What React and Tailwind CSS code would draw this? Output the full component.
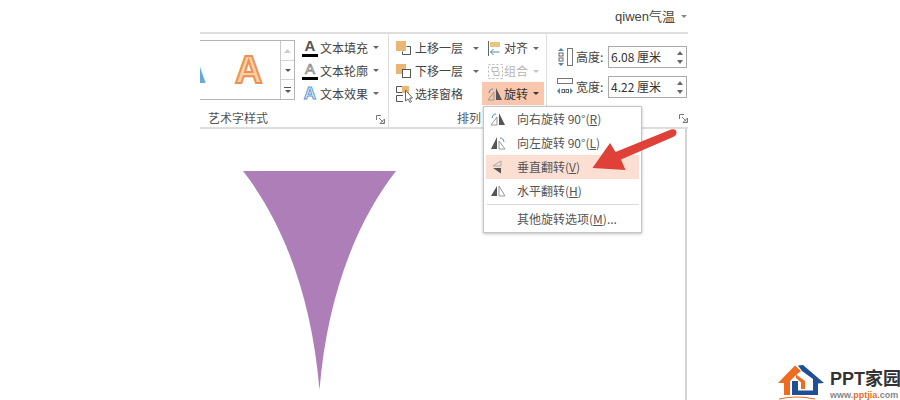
const F = { fontFamily: '"Noto Sans CJK SC","Liberation Sans",sans-serif' };

const Caret = ({ c = "#666" }) => (
  <svg width="6" height="3" viewBox="0 0 6 3" className="shrink-0"><path d="M0 0h6L3 3z" fill={c} /></svg>
);

const Launcher = () => (
  <svg width="9" height="9" viewBox="0 0 9 9" className="shrink-0" fill="none">
    <path d="M.5 5V.5H5" stroke="#777" />
    <path d="M3 3l4.5 4.500M8.500 4v4.500H4z" stroke="#777" />
  </svg>
);

const RotR = () => (
  <svg width="16" height="14" viewBox="0 0 16 14">
    <path d="M1 13L7 5v8z" fill="none" stroke="#999" />
    <path d="M9 1l6 12H9z" fill="#555" />
    <path d="M2 6C2.500 3 4 2 6 2" fill="none" stroke="#4a87b8" strokeWidth="1" />
  </svg>
);
const RotL = () => (
  <svg width="16" height="14" viewBox="0 0 16 14">
    <path d="M7 1L1 13h6z" fill="#555" />
    <path d="M9 5l6 8H9z" fill="none" stroke="#999" />
    <path d="M14 6C13.500 3 12 2 10 2" fill="none" stroke="#4a87b8" />
  </svg>
);
const FlipV = () => (
  <svg width="16" height="14" viewBox="0 0 16 14">
    <path d="M11 1L3 6h8z" fill="none" stroke="#aaa" />
    <path d="M11 8H3l8 5.500z" fill="#555" />
  </svg>
);
const FlipH = () => (
  <svg width="16" height="14" viewBox="0 0 16 14">
    <path d="M7 2L1 12h6z" fill="#555" />
    <path d="M9 2l6 10H9z" fill="none" stroke="#999" />
  </svg>
);

const TextA = ({ kind }) => (
  <div className="w-[16px] h-[20px] flex flex-col items-center shrink-0">
    {kind === "fill" && (
      <>
        <span className="text-[15px] leading-[15px] font-bold text-[#555] font-['Liberation_Sans']">A</span>
        <span className="w-[16px] h-[3px] mt-[1px] bg-black" />
      </>
    )}
    {kind === "line" && (
      <>
        <span className="text-[15px] leading-[15px] text-white [-webkit-text-stroke:0.7px_#777] font-['Liberation_Sans']">A</span>
        <span className="w-[16px] h-[3px] mt-[1px] bg-black" />
      </>
    )}
    {kind === "fx" && (
      <span className="text-[17px] leading-[19px] font-bold text-[#eaf3fb] [-webkit-text-stroke:1px_#5b9bd5] font-['Liberation_Sans']">A</span>
    )}
  </div>
);

const TextRow = ({ kind, label }) => (
  <div className="h-[23px] flex items-center gap-[2px]">
    <TextA kind={kind} />
    <span className="text-[12px] leading-none text-[#444]">{label}</span>
    <span className="ml-[3px]"><Caret /></span>
  </div>
);

const LayerIcon = ({ up }) => (
  <svg width="16" height="16" viewBox="0 0 16 16">
    <rect x="0" y="1" width="10" height="10" fill="#e9b673" />
    {up ? (
      <path d="M10.500 6.500h4v8h-8v-3" fill="none" stroke="#555" />
    ) : (
      <rect x="6.500" y="6.500" width="8" height="8" fill="#fff" stroke="#555" />
    )}
  </svg>
);

const SelectIcon = () => (
  <svg width="18" height="18" viewBox="0 0 18 18" fill="none">
    <path d="M7 1.500H.5v6H7M7 10.500H.5v6H7" stroke="#555" />
    <rect x="6" y="1" width="7" height="7" fill="#e9b673" />
    <path d="M9.500 5v11l2.500-2 2 3.500 1.500-.8-2-3.400 3-.3z" fill="#fff" stroke="#666" />
  </svg>
);

const AlignIcon = () => (
  <svg width="16" height="17" viewBox="0 0 16 17" fill="none">
    <path d="M1.500 1v15" stroke="#666" />
    <rect x="3" y="2" width="10" height="5" fill="#e9c47f" />
    <path d="M3.500 12h9M3.500 12l3-3M3.500 12l3 3" stroke="#4a87b8" />
  </svg>
);

const GroupIcon = () => (
  <svg width="17" height="17" viewBox="0 0 17 17" fill="none" stroke="#b8b8b8">
    <rect x="1.500" y="1.500" width="14" height="14" strokeDasharray="2 2" />
    <path d="M5 4.500h6v4H5zM7 8.500v4h5v-4" />
  </svg>
);

const HeightIcon = () => (
  <svg width="16" height="18" viewBox="0 0 16 18" fill="none">
    <path d="M4 0L1 3h6zM4 18l-3-3h6z" fill="#4a87b8" />
    <rect x="2" y="5" width="4" height="3" stroke="#666" />
    <rect x="2" y="10" width="4" height="3" stroke="#666" />
    <rect x="10.500" y=".5" width="5" height="17" stroke="#777" />
  </svg>
);

const WidthIcon = () => (
  <svg width="16" height="18" viewBox="0 0 16 18" fill="none">
    <rect x=".5" y=".5" width="15" height="5" stroke="#777" />
    <path d="M0 13l3-3v6zM16 13l-3-3v6z" fill="#4a87b8" />
    <rect x="5" y="11.500" width="2.500" height="3" stroke="#666" />
    <rect x="9" y="11.500" width="2.500" height="3" stroke="#666" />
  </svg>
);

const SizeRow = ({ icon, label, value }) => (
  <div className="flex items-center h-[22px]">
    <span className="w-[19px] shrink-0 flex">{icon}</span>
    <span className="w-[32px] shrink-0 text-[12px] leading-none text-[#444]">{label}</span>
    <div className="w-[79px] h-[22px] border border-[#ababab] flex items-center pl-[2px] pr-[3px] text-[12px] text-[#333]">
      <span className="flex-1 whitespace-pre">{value}</span>
      <span className="flex flex-col gap-[5px]">
        <svg width="6" height="4" viewBox="0 0 6 4"><path d="M3 0l3 4H0z" fill="#666" /></svg>
        <svg width="6" height="4" viewBox="0 0 6 4"><path d="M3 4l3-4H0z" fill="#666" /></svg>
      </span>
    </div>
  </div>
);

const MenuItem = ({ icon, label, hot, active }) => (
  <div className={`h-[24px] flex items-center ${active ? "bg-[#fbdfd2]" : ""}`}>
    <span className="w-[31px] pl-[4px] shrink-0 flex">{icon}</span>
    <span className="text-[12px] leading-none text-[#555] whitespace-pre">
      {label}(<span className="underline">{hot}</span>){hot === "M" ? "..." : ""}
    </span>
  </div>
);

export default function App() {
  return (
    <div style={F} className="relative w-[900px] h-[400px] bg-white overflow-hidden">
      <div className="ml-[200px] w-[488px] h-[400px] flex flex-col">
        <div className="h-[34px] shrink-0 border-b-2 border-[#dedede] flex items-center justify-end gap-[6px] pr-[1px]">
          <span className="text-[13px] leading-none text-[#444] font-['Liberation_Sans','Noto_Sans_CJK_SC']">qiwen气温</span>
          <Caret c="#888" />
        </div>

        <div className="h-[95px] shrink-0 border-b-2 border-[#dedede] flex">
          {/* 艺术字样式 */}
          <div className="w-[189px] shrink-0 border-r border-[#dedede] flex flex-col">
            <div className="h-[71px] flex pt-[6px]">
              <div className="w-[95px] h-[60px] border border-l-0 border-[#b5b5b5] flex shrink-0">
                <div className="w-[80px] flex overflow-hidden items-center">
                  <span className="text-[38px] leading-none font-bold text-[#6aa6d8] font-['Liberation_Sans'] -ml-[21px] w-[56px] shrink-0">A</span>
                  <span className="text-[38px] leading-none font-bold text-[#fbd0a8] [-webkit-text-stroke:2px_#ee9150] font-['Liberation_Sans']">A</span>
                </div>
                <div className="w-[14px] border-l border-[#c9c9c9] flex flex-col">
                  <div className="h-[20px] border-b border-[#d4d4d4] flex items-center justify-center">
                    <svg width="7" height="4" viewBox="0 0 7 4"><path d="M3.500 0L7 4H0z" fill="#ccc" /></svg>
                  </div>
                  <div className="h-[19px] border-b border-[#d4d4d4] flex items-center justify-center"><Caret c="#555" /></div>
                  <div className="flex-1 flex flex-col items-center justify-center gap-[2px]">
                    <span className="w-[7px] h-[1px] bg-[#555]" />
                    <Caret c="#555" />
                  </div>
                </div>
              </div>
              <div className="ml-[7px] -mt-[4px] flex flex-col">
                <TextRow kind="fill" label="文本填充" />
                <TextRow kind="line" label="文本轮廓" />
                <TextRow kind="fx" label="文本效果" />
              </div>
            </div>
            <div className="flex-1 flex items-start justify-between pl-[8px] pr-[3px] pt-[5px]">
              <span className="text-[12px] leading-[16px] text-[#555]">艺术字样式</span>
              <span className="mt-[5px]"><Launcher /></span>
            </div>
          </div>

          {/* 排列 */}
          <div className="w-[158px] shrink-0 border-r border-[#dedede] flex flex-col">
            <div className="h-[71px] pt-[3px] pl-[7px] flex">
              <div className="w-[91px] shrink-0 flex flex-col">
                <div className="h-[23px] flex items-center">
                  <span className="w-[19px] flex"><LayerIcon up /></span>
                  <span className="w-[58px] text-[12px] leading-none text-[#444]">上移一层</span>
                  <Caret />
                </div>
                <div className="h-[23px] flex items-center">
                  <span className="w-[19px] flex"><LayerIcon /></span>
                  <span className="w-[58px] text-[12px] leading-none text-[#444]">下移一层</span>
                  <Caret />
                </div>
                <div className="h-[23px] flex items-center">
                  <span className="w-[19px] flex"><SelectIcon /></span>
                  <span className="text-[12px] leading-none text-[#444]">选择窗格</span>
                </div>
              </div>
              <div className="flex flex-col w-[62px] -ml-[5px] shrink-0">
                <div className="h-[23px] flex items-center pl-[5px]">
                  <span className="w-[17px] flex"><AlignIcon /></span>
                  <span className="text-[12px] leading-none text-[#444] mr-[5px]">对齐</span>
                  <Caret />
                </div>
                <div className="h-[23px] flex items-center pl-[5px]">
                  <span className="w-[17px] flex"><GroupIcon /></span>
                  <span className="text-[12px] leading-none text-[#b5b5b5] mr-[5px]">组合</span>
                  <Caret c="#c4c4c4" />
                </div>
                <div className="h-[23px] flex items-center pl-[5px] bg-[#f8c7ae]">
                  <span className="w-[17px] flex"><RotR /></span>
                  <span className="text-[12px] leading-none text-[#333] mr-[5px]">旋转</span>
                  <Caret c="#333" />
                </div>
              </div>
            </div>
            <div className="flex-1 flex items-start pl-[68px] pt-[5px]">
              <span className="text-[12px] leading-[16px] text-[#555]">排列</span>
            </div>
          </div>

          {/* 大小 */}
          <div className="flex-1 flex flex-col">
            <div className="h-[71px] pl-[10px] pt-[12px] flex flex-col gap-[8px]">
              <SizeRow icon={<HeightIcon />} label="高度:" value="6.08 厘米" />
              <SizeRow icon={<WidthIcon />} label="宽度:" value="4.22 厘米" />
            </div>
            <div className="flex-1 flex justify-end pt-[9px]">
              <Launcher />
            </div>
          </div>
        </div>

        {/* 画布 */}
        <div className="flex-1 border-r-2 border-[#d4d4d4] mr-[1px]" />
      </div>

      {/* 下拉菜单 */}
      <div className="absolute left-[483px] top-[106px] w-[159px] h-[127px] bg-white border border-[#c6c6c6] shadow-[0_1px_3px_rgba(0,0,0,0.25)] px-[2px] flex flex-col">
        <MenuItem icon={<RotR />} label="向右旋转 90°" hot="R" />
        <MenuItem icon={<RotL />} label="向左旋转 90°" hot="L" />
        <MenuItem icon={<FlipV />} label="垂直翻转" hot="V" active />
        <MenuItem icon={<FlipH />} label="水平翻转" hot="H" />
        <div className="h-[1px] mt-[1px] mb-[2px] ml-[1px] bg-[#dcdcdc]" />
        <MenuItem label="其他旋转选项" hot="M" />
      </div>

      {/* 紫色图形 */}
      <svg className="absolute left-[240px] top-[168px]" width="160" height="226" viewBox="240 168 160 226">
        <path d="M243 171H396C354 225 327 300 319.500 390 312 300 285 225 243 171Z" fill="#ad7eb8" />
      </svg>

      {/* 红色箭头 */}
      <svg className="absolute left-[585px] top-[125px]" width="95" height="50" viewBox="585 125 95 50">
        <path d="M592.500 168L610 143 615.500 152 671 129.500Q676 128.500 676.500 132 677 135 673 137L621 159.500 625.500 170Z" fill="#df4037" />
      </svg>

      {/* Logo */}
      <div className="absolute left-[775px] top-[364px] w-[125px] h-[36px] flex">
        <svg width="52" height="36" viewBox="0 0 52 36" className="shrink-0">
          <path d="M23 1.500L28 1 49 19 43 19.500V31H17V17H23V26.500H38V15L27 7Z" fill="#1f4f96" />
          <path d="M3 19L20 1.500 26 7 21 11 15 17V31H9V19Z" fill="#ee6c1f" />
          <path d="M21 10.500L30 17V25H26V18.500L21 14Z" fill="#ee6c1f" />
          <path d="M4 35Q22 31 40 35" fill="none" stroke="#ee6c1f" strokeWidth="1.200" />
        </svg>
        <div className="flex flex-col ml-[3px] font-['Liberation_Sans','Noto_Sans_CJK_SC']">
          <span className="text-[18px] leading-[22px] mt-[4px] font-bold text-[#333] whitespace-nowrap">PPT家园</span>
          <span className="text-[9px] leading-[10px] font-bold text-[#888] whitespace-nowrap">www.<span className="text-[#ee6c1f]">pptjia</span>.com</span>
        </div>
      </div>
    </div>
  );
}
